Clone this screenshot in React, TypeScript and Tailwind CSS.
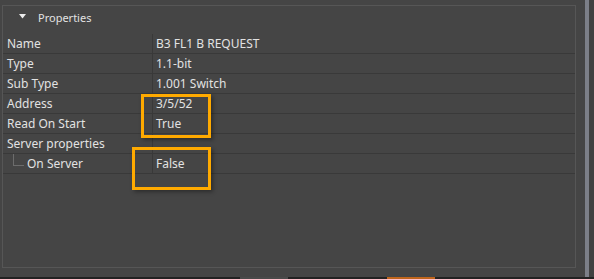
const rows = [
  { label: 'Name', value: 'B3 FL1 B REQUEST' },
  { label: 'Type', value: '1.1-bit' },
  { label: 'Sub Type', value: '1.001 Switch' },
  { label: 'Address', value: '3/5/52' },
  { label: 'Read On Start', value: 'True' },
  { label: 'Server properties', value: '' },
];

export default function App() {
  return (
    <div
      className="relative w-[594px] h-[279px] overflow-hidden bg-[#454545] text-[#e2e2e2] flex flex-col"
      style={{ fontFamily: '"Noto Sans", "Open Sans", sans-serif' }}
    >
      <div className="flex flex-1 min-h-0">
        {/* Properties group */}
        <div className="flex-1 pt-[5px] pl-[2px] pr-[9px] pb-[9px]">
          <div className="h-full border border-[#565656]">
            <div className="h-[28px] flex items-center pl-[16px] pb-[5px]">
              <svg width="7" height="5" viewBox="0 0 7 5" className="mr-[12px] mb-[2px]">
                <path d="M0 0 L7 0 L3.5 4.5 Z" fill="#ececec" />
              </svg>
              <span className="text-[11px] leading-none">Properties</span>
            </div>

            {rows.map((r) => (
              <div key={r.label} className="flex h-[20px] border-b border-[#393939] text-[12px]">
                <div className="w-[150px] border-r border-[#393939] pl-[4px] flex items-center">
                  {r.label}
                </div>
                <div className="flex-1 pl-[3px] flex items-center">{r.value}</div>
              </div>
            ))}

            {/* nested row */}
            <div className="flex h-[20px] border-b border-[#393939] text-[12px]">
              <div className="w-[150px] border-r border-[#393939] flex items-center">
                <div className="ml-[10px] mb-[7px] w-[11px] h-[12px] border-l border-b border-[#6c6c6c] self-end" />
                <span className="ml-[3px]">On Server</span>
              </div>
              <div className="flex-1 pl-[3px] flex items-center">False</div>
            </div>
          </div>
        </div>

        {/* scrollbar */}
        <div className="w-[4px] bg-[#7c7f88]" />
        <div className="w-[5px] bg-[#414141]" />
      </div>

      {/* bottom strip */}
      <div className="h-[2px] flex bg-[#222222]">
        <div className="w-[240px]" />
        <div className="w-[48px] bg-[#4a4a4a]" />
        <div className="w-[99px]" />
        <div className="w-[48px] bg-[#c0661c]" />
      </div>

      {/* highlight boxes */}
      <div className="absolute left-[141px] top-[94px] w-[70px] h-[44px] border-[3px] border-[#ffaa00] shadow-[2px_2px_4px_rgba(0,0,0,0.35)]" />
      <div className="absolute left-[132px] top-[147px] w-[79px] h-[43px] border-[3px] border-[#ffaa00] shadow-[2px_2px_4px_rgba(0,0,0,0.35)]" />
    </div>
  );
}
